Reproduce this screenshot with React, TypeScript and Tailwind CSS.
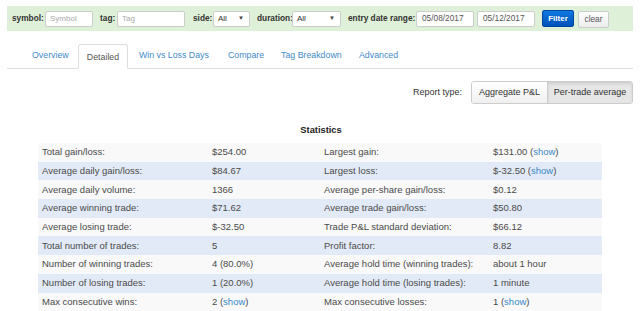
import React from "react";

const Show = () => <span className="text-[#3a87c8]">show</span>;

const rows: [string, React.ReactNode, string, React.ReactNode][] = [
  ["Total gain/loss:", "$254.00", "Largest gain:", <>$131.00 (<Show />)</>],
  ["Average daily gain/loss:", "$84.67", "Largest loss:", <>$-32.50 (<Show />)</>],
  ["Average daily volume:", "1366", "Average per-share gain/loss:", "$0.12"],
  ["Average winning trade:", "$71.62", "Average trade gain/loss:", "$50.80"],
  ["Average losing trade:", "$-32.50", "Trade P&L standard deviation:", "$66.12"],
  ["Total number of trades:", "5", "Profit factor:", "8.82"],
  ["Number of winning trades:", "4 (80.0%)", "Average hold time (winning trades):", "about 1 hour"],
  ["Number of losing trades:", "1 (20.0%)", "Average hold time (losing trades):", "1 minute"],
  ["Max consecutive wins:", <>2 (<Show />)</>, "Max consecutive losses:", <>1 (<Show />)</>],
];

function Select({ w, value }: { w: string; value: string }) {
  return (
    <div className={`${w} h-[16px] border border-[#ccc] bg-white rounded-[2px] flex items-center justify-between pl-[4px] pr-[5px] text-[8px] text-[#333]`}>
      <span>{value}</span>
      <span className="text-[6px] text-[#444]">▼</span>
    </div>
  );
}

export default function App() {
  return (
    <div className="w-[640px] h-[311px] bg-white overflow-hidden text-[#333]" style={{ fontFamily: '"Liberation Sans", Arial, sans-serif' }}>
      <div className="pt-[6px] px-[7px]">
        <div className="h-[25px] bg-[#dff0d8] flex items-center pl-[5px] whitespace-nowrap">
          <span className="w-[31px] font-bold text-[8.3px] text-[#333]">symbol:</span>
          <div className="ml-[2px] w-[48px] h-[16px] bg-white border border-[#ccc] rounded-[2px] flex items-center pl-[4px] text-[8px] text-[#aaa]">Symbol</div>
          <span className="ml-[7px] w-[15px] font-bold text-[8.3px]">tag:</span>
          <div className="ml-[2px] w-[68px] h-[16px] bg-white border border-[#ccc] rounded-[2px] flex items-center pl-[4px] text-[8px] text-[#aaa]">Tag</div>
          <span className="ml-[8px] w-[17px] font-bold text-[8.3px]">side:</span>
          <div className="ml-[3px]"><Select w="w-[37px]" value="All" /></div>
          <span className="ml-[7px] w-[32px] font-bold text-[8.3px]">duration:</span>
          <div className="ml-[3px]"><Select w="w-[49px]" value="All" /></div>
          <span className="ml-[7px] w-[64px] font-bold text-[8.3px]">entry date range:</span>
          <div className="ml-[4px] w-[58px] h-[16px] bg-white border border-[#ccc] rounded-[2px] flex items-center pl-[5px] text-[8.3px] text-[#555]">05/08/2017</div>
          <div className="ml-[3px] w-[58px] h-[16px] bg-white border border-[#ccc] rounded-[2px] flex items-center pl-[5px] text-[8.3px] text-[#555]">05/12/2017</div>
          <div className="ml-[7px] w-[32px] h-[17px] rounded-[2px] bg-gradient-to-b from-[#0e78e0] to-[#0052b8] border border-[#0046a0] text-white font-bold text-[8px] flex items-center justify-center">Filter</div>
          <div className="ml-[4px] w-[31px] h-[17px] mt-[2px] rounded-[2px] bg-gradient-to-b from-white to-[#ececec] border border-[#ccc] text-[#555] text-[8.3px] flex items-center justify-center">clear</div>
        </div>
      </div>

      <div className="mx-[7px] mt-[14px] h-[24px] border-b border-[#ddd] flex items-end text-[8.8px] whitespace-nowrap">
        <div className="ml-[25px] w-[36px] mb-[6px] text-[#428bca]">Overview</div>
        <div className="ml-[10px] w-[50px] h-[25px] -mb-[1px] pt-[2px] bg-white border border-[#ddd] border-b-white rounded-t-[3px] flex items-center justify-center text-[#555]">Detailed</div>
        <div className="ml-[11px] w-[70px] mb-[6px] text-[#428bca]">Win vs Loss Days</div>
        <div className="ml-[19px] w-[35px] mb-[6px] text-[#428bca]">Compare</div>
        <div className="ml-[18px] w-[60px] mb-[6px] text-[#428bca]">Tag Breakdown</div>
        <div className="ml-[18px] mb-[6px] text-[#428bca]">Advanced</div>
      </div>

      <div className="flex justify-end items-center mt-[12px] pr-[7px]">
        <span className="text-[9px] text-[#333] mr-[9px]">Report type:</span>
        <div className="flex h-[23px] border border-[#ccc] rounded-[3px] overflow-hidden text-[9px] text-[#333] whitespace-nowrap">
          <div className="w-[76px] bg-gradient-to-b from-white to-[#f0f0f0] flex items-center justify-center border-r border-[#ccc]">Aggregate P&amp;L</div>
          <div className="w-[84px] bg-[#e6e6e6] flex items-center justify-center shadow-[inset_0_2px_3px_rgba(0,0,0,0.1)]">Per-trade average</div>
        </div>
      </div>

      <div className="text-center font-bold text-[9.3px] text-[#222] mt-[20px] h-[12px] leading-[12px] pl-[2px]">Statistics</div>

      <div className="ml-[38px] w-[564px] mt-[7px] whitespace-nowrap">
        {rows.map((r, i) => (
          <div key={i} className={`flex h-[18.7px] items-center text-[9.5px] text-[#4a4a4a] ${i % 2 === 0 ? "bg-[#f9f9f9]" : "bg-[#e3eaf7]"}`}>
            <div className="w-[170px] pl-[4px]">{r[0]}</div>
            <div className="w-[112px] pl-[4px]">{r[1]}</div>
            <div className="w-[169px] pl-[4px]">{r[2]}</div>
            <div className="w-[113px] pl-[4px]">{r[3]}</div>
          </div>
        ))}
      </div>
    </div>
  );
}
